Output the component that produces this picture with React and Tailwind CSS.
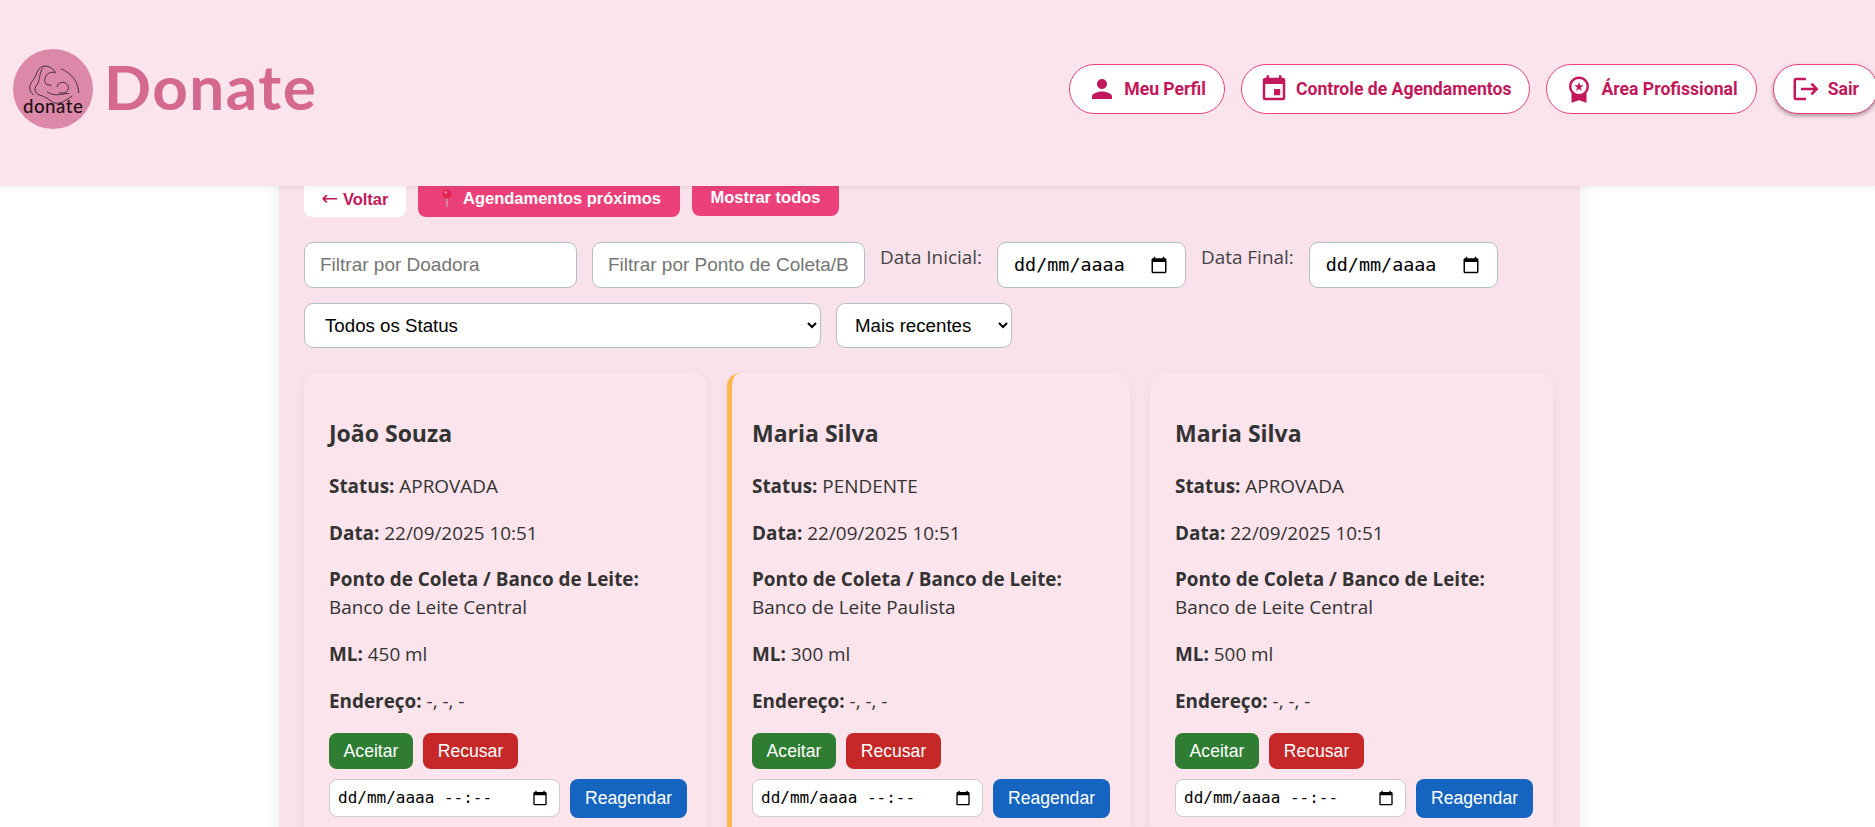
import { MdPerson, MdEvent, MdWorkspacePremium, MdLogout, MdCalendarToday } from "react-icons/md";

const agendamentos = [
  { id: 1, nome: "João Souza", status: "APROVADA", banco: "Banco de Leite Central", ml: 450 },
  { id: 2, nome: "Maria Silva", status: "PENDENTE", banco: "Banco de Leite Paulista", ml: 300 },
  { id: 3, nome: "Maria Silva", status: "APROVADA", banco: "Banco de Leite Central", ml: 500 },
];

const navLinks = [
  { label: "Meu Perfil", icon: MdPerson },
  { label: "Controle de Agendamentos", icon: MdEvent },
  { label: "Área Profissional", icon: MdWorkspacePremium },
  { label: "Sair", icon: MdLogout, raised: true },
];

const LogoMark = () => (
  <svg viewBox="15 15 240 240" className="w-20 h-20 shrink-0">
    <circle cx="135" cy="135" r="120" fill="#dc88a9" />
    <g fill="none" stroke="#2a1a22" strokeWidth="2.4" strokeLinecap="round">
      <path d="M142 84 C128 64 104 60 92 76 C84 88 84 98 74 110 C62 124 62 142 76 152" />
      <path d="M104 72 C92 88 98 112 84 126 C78 136 80 146 92 152" />
      <path d="M142 86 C124 80 110 92 110 112 L116 122 L130 124" />
      <path d="M160 75 C190 86 212 115 212 146" />
      <path d="M147 128 C150 112 172 110 180 124 C186 140 170 152 154 146" />
      <path d="M92 152 C108 156 122 166 136 176 C152 182 172 172 192 156" />
      <path d="M118 144 C128 150 138 154 150 152 L182 148" />
    </g>
    <text x="45" y="208" fontSize="56" fontFamily="Lato, sans-serif" fontWeight="500" letterSpacing="1.5" fill="#1c1116">
      donate
    </text>
  </svg>
);

const Header = () => (
  <header className="absolute top-0 left-0 right-0 z-10 h-[186px] bg-[#fce4ec] shadow-[0_2px_6px_rgba(0,0,0,0.06)] flex items-center justify-between pl-[13px] -mr-[3px] pb-[9px]">
    <div className="flex items-center gap-[11px]">
      <LogoMark />
      <span className="-mt-[5px] font-['Lato',sans-serif] font-bold text-[62px] leading-none text-[#d4688f] tracking-[1.5px]">
        Donate
      </span>
    </div>
    <nav className="flex items-center gap-4">
      {navLinks.map((link) => {
        const Icon = link.icon;
        return (
          <a
            key={link.label}
            className={`flex items-center gap-[7px] h-[50px] pl-[17px] pr-[18px] bg-white border border-[#ec407a] rounded-[25px] text-[#c2185b] font-['Roboto',sans-serif] font-bold text-[17.6px] ${
              link.raised ? "shadow-[0_2px_4px_rgba(0,0,0,0.35)]" : ""
            }`}
          >
            <Icon size={30} />
            <span className="mt-px">{link.label}</span>
          </a>
        );
      })}
    </nav>
  </header>
);

const DateField = ({ text, className, iconSize }) => (
  <div className={`flex items-center justify-between bg-white font-['DejaVu_Sans_Mono',monospace] text-black ${className}`}>
    <span>{text}</span>
    <MdCalendarToday size={iconSize} />
  </div>
);

const AgendamentoCard = ({ item }) => (
  <div
    className={`bg-[#fce4ec] rounded-[13px] shadow-[0_3px_12px_rgba(0,0,0,0.06)] pt-[44px] pr-[20px] pb-[25px] ${
      item.status === "PENDENTE" ? "border-l-[5px] border-[#ffb74d] pl-[20px]" : "pl-[25px]"
    }`}
  >
    <h3 className="text-[23px] font-bold leading-[32px] mb-[23px]">{item.nome}</h3>
    <p className="mb-[18.7px]">
      <strong>Status:</strong> {item.status}
    </p>
    <p className="mb-[18.7px]">
      <strong>Data:</strong> 22/09/2025 10:51
    </p>
    <p className="mb-[18.7px]">
      <strong>Ponto de Coleta / Banco de Leite:</strong>
      <br />
      {item.banco}
    </p>
    <p className="mb-[18.7px]">
      <strong>ML:</strong> {item.ml} ml
    </p>
    <p className="mb-[18px]">
      <strong>Endereço:</strong> -, -, -
    </p>
    <div className="flex gap-[10px] font-['Liberation_Sans',sans-serif] text-[17.6px] text-white">
      <button className="h-[36px] w-[84px] rounded-[8px] bg-[#2e7d32]">Aceitar</button>
      <button className="h-[36px] w-[95px] rounded-[8px] bg-[#c62828]">Recusar</button>
    </div>
    <div className="flex items-center gap-[10px] mt-[10px]">
      <DateField
        text="dd/mm/aaaa --:--"
        iconSize={16}
        className="w-[231px] h-[38px] pl-[8px] pr-[11px] border border-[#cccccc] rounded-[8px] text-[16px]"
      />
      <button className="w-[117px] h-[39px] rounded-[8px] bg-[#1565c0] text-white font-['Liberation_Sans',sans-serif] text-[17.6px]">
        Reagendar
      </button>
    </div>
  </div>
);

export default function App() {
  return (
    <div className="relative h-screen overflow-hidden bg-white text-[#333333] font-['Open_Sans',sans-serif] text-[18.9px] leading-[28px]">
      <Header />

      <main className="ml-[279px] w-[1301px] bg-[#f9e2ec] shadow-[0_4px_16px_rgba(0,0,0,0.08)] px-[25px] pt-[179px] pb-10">
        <div className="flex gap-3 font-['Liberation_Sans',sans-serif] font-bold text-[16.5px] leading-[38px] h-[38px]">
          <button className="w-[102px] rounded-[8px] bg-white text-[#c2185b]">
            <span className="font-['DejaVu_Sans',sans-serif] font-normal text-[20px]">←</span> Voltar
          </button>
          <button className="w-[262px] rounded-[8px] bg-[#ec407a] text-white flex items-center pl-[24px] gap-[11px]">
            <svg width="10" height="18" viewBox="0 0 10 18" className="-mt-px">
              <path d="M5 8 L5 18" stroke="#b9aeb4" strokeWidth="1.2" />
              <circle cx="5" cy="5" r="4.6" fill="#e5254f" />
              <circle cx="3.8" cy="3.6" r="1.3" fill="#f58ba0" />
            </svg>
            Agendamentos próximos
          </button>
          <button className="w-[147px] rounded-[8px] bg-[#ec407a] text-white -translate-y-px">Mostrar todos</button>
        </div>

        <div className="flex flex-wrap gap-x-[15px] gap-y-[15px] mt-[25px]">
          <input
            placeholder="Filtrar por Doadora"
            className="w-[273px] h-[46px] px-[15px] bg-white border border-[#b0bec5] rounded-[9px] font-['Liberation_Sans',sans-serif] text-[19px] placeholder:text-[#757575]"
          />
          <input
            placeholder="Filtrar por Ponto de Coleta/Banco"
            className="w-[273px] h-[46px] px-[15px] bg-white border border-[#b0bec5] rounded-[9px] font-['Liberation_Sans',sans-serif] text-[19px] placeholder:text-[#757575]"
          />
          <label className="mt-px text-[#444444]">Data Inicial:</label>
          <DateField
            text="dd/mm/aaaa"
            iconSize={18}
            className="w-[189px] h-[46px] pl-[16px] pr-[17px] border border-[#b0bec5] rounded-[9px] text-[18.4px]"
          />
          <label className="mt-px text-[#444444]">Data Final:</label>
          <DateField
            text="dd/mm/aaaa"
            iconSize={18}
            className="w-[189px] h-[46px] pl-[16px] pr-[17px] border border-[#b0bec5] rounded-[9px] text-[18.4px]"
          />
          <div className="basis-full flex gap-[15px]">
            <select className="w-[517px] h-[45px] pl-[16px] bg-white border border-[#b0bec5] rounded-[9px] text-black font-['Liberation_Sans',sans-serif] text-[18.7px]">
              <option>Todos os Status</option>
            </select>
            <select className="w-[176px] h-[45px] pl-[14px] bg-white border border-[#b0bec5] rounded-[9px] text-black font-['Liberation_Sans',sans-serif] text-[18.7px]">
              <option>Mais recentes</option>
            </select>
          </div>
        </div>

        <div className="grid grid-cols-[repeat(3,403px)] gap-5 mt-[25px]">
          {agendamentos.map((item) => (
            <AgendamentoCard key={item.id} item={item} />
          ))}
        </div>
      </main>
    </div>
  );
}
